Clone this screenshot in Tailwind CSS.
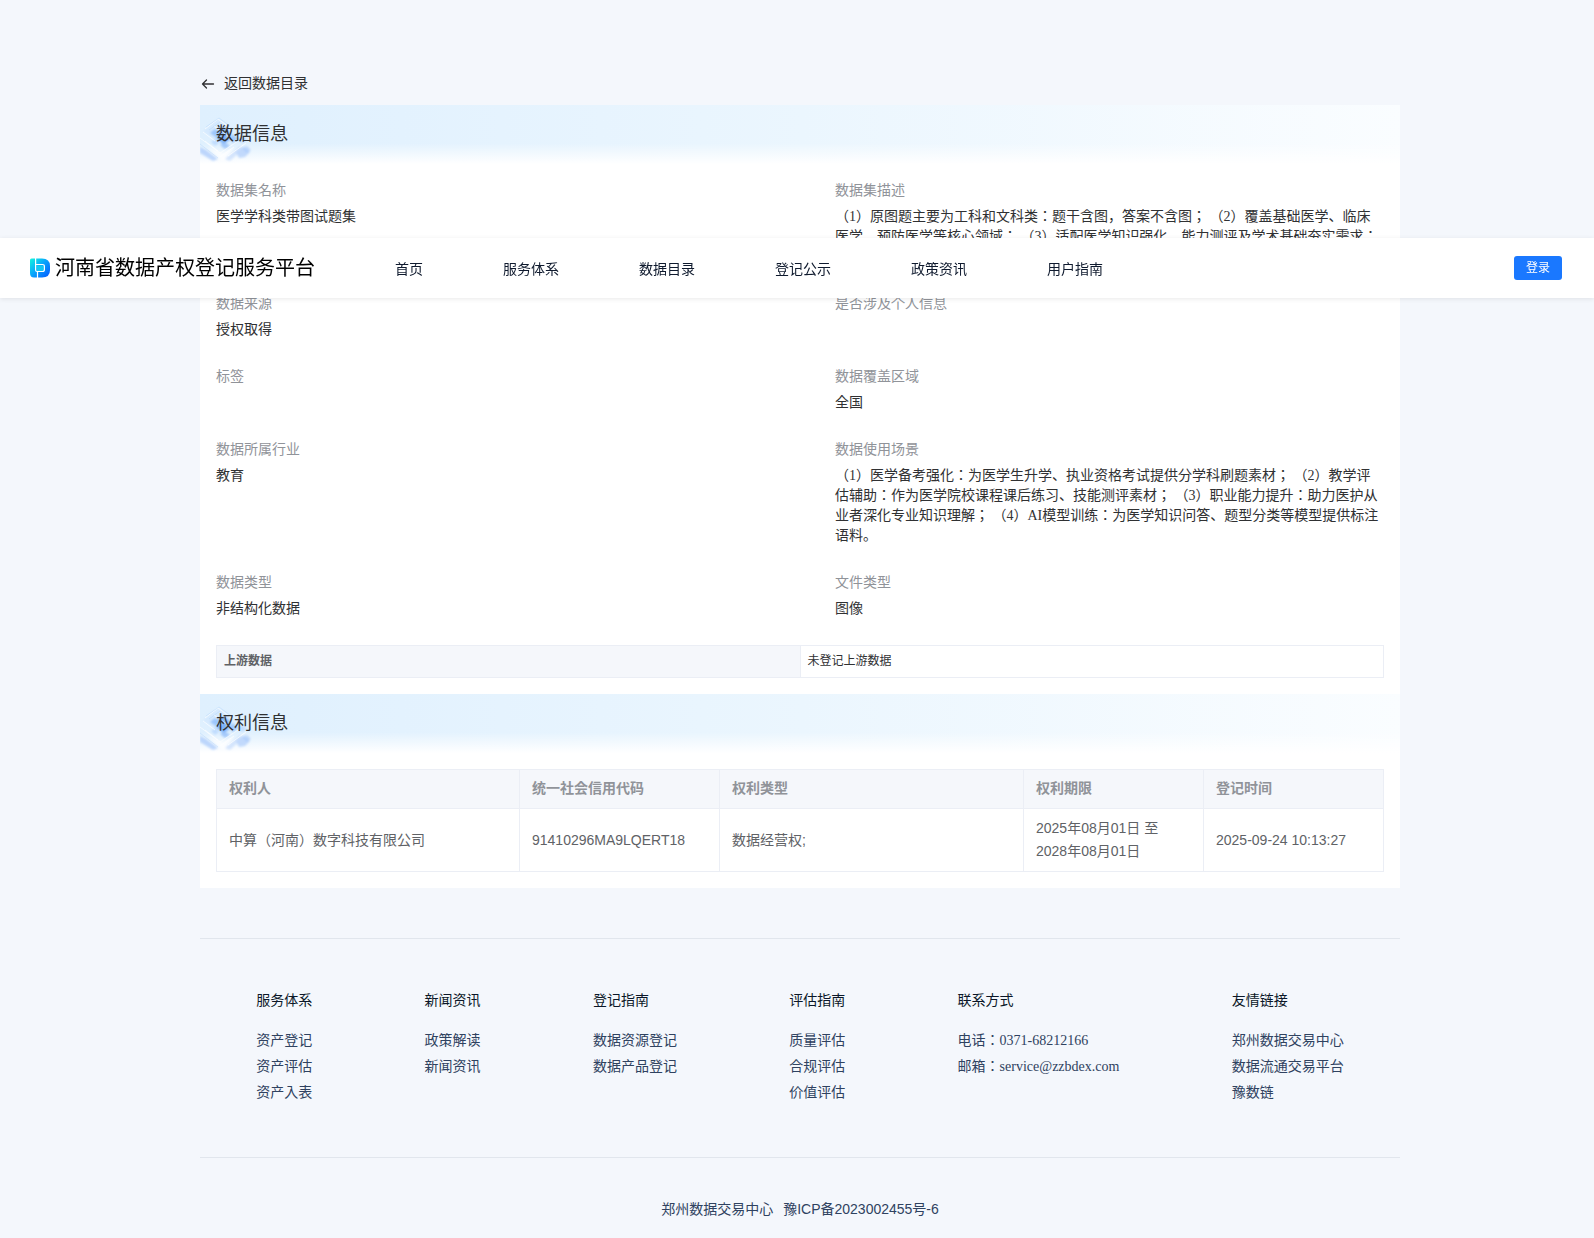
<!DOCTYPE html>
<html lang="ja">
<head>
    <meta charset="UTF-8">
    <meta name="viewport" content="width=device-width, initial-scale=1.0">
    <title>河南省数据产权登记服务平台</title>
    <script src="https://cdn.jsdelivr.net/npm/@tailwindcss/browser@4"></script>
</head>

<body class="bg-[#f4f7fc] min-h-screen text-sm leading-5 text-[#303133] font-['Liberation_Serif','Noto_Sans_CJK_JP',sans-serif]">

    <!-- shared drawings -->
    <svg class="absolute w-0 h-0" aria-hidden="true">
        <defs>
            <filter id="soft" x="-20%" y="-20%" width="140%" height="140%">
                <feGaussianBlur stdDeviation="1"/>
            </filter>
            <symbol id="cubes" viewBox="0 0 60 59">
                <g filter="url(#soft)">
                    <path d="M18 14 34 25 18 37 3 26Z" fill="#d3e8fe" opacity=".8"/>
                    <path d="M10 28 15 24 22 28 17 33Z" fill="#8dbefb" opacity=".8"/>
                    <path d="M18 25 24 22 31 28 25 33Z" fill="#6ba8f8" opacity=".75"/>
                    <path d="M16 33 23 30 30 35 23 39Z" fill="#5e9ff7" opacity=".75"/>
                    <path d="M28 32 33 29 38 34 33 38Z" fill="#8fbffb" opacity=".75"/>
                    <path d="M20 40 25 37 30 41 25 44Z" fill="#8ab9fa" opacity=".7"/>
                    <path d="M37 34 42 31 47 35 42 38Z" fill="#b9d8fd" opacity=".8"/>
                    <path d="M11 37 15 34 19 38 15 41Z" fill="#b3d4fd" opacity=".7"/>
                    <path d="M36 47 43 42 50 47 45 52 39 53Z" fill="#b2cffb" opacity=".75"/>
                    <path d="M42 43 47 41 51 45 47 48Z" fill="#a3c6fb" opacity=".6"/>
                    <path d="M25 54 40 41 43 44 30 56Z" fill="#bfd7fc" opacity=".6"/>
                    <path d="M0 42 6 45 18 54 13 56 0 48Z" fill="#a6c8fb" opacity=".7"/>
                    <path d="M8 42 22 48 34 43 23 56Z" fill="#ffffff" opacity=".7"/>
                </g>
                <path d="M5 24 18 14 33 25M0 33 20 48 38 36M3 27 15 36M14 21 28 31M28 51 46 38M5 36 18 46M20 52 34 42" fill="none" stroke="#ffffff" stroke-width="1" opacity=".65"/>
                <path d="M6 22 19 13 30 21M0 39 18 53M9 25 20 17" fill="none" stroke="#a9cdf8" stroke-width=".7" opacity=".5"/>
            </symbol>
            <linearGradient id="logoFill" gradientUnits="userSpaceOnUse" x1="0" y1="2" x2="18" y2="19">
                <stop offset="0" stop-color="#12f0e0"/>
                <stop offset=".45" stop-color="#08a8fb"/>
                <stop offset="1" stop-color="#0560ff"/>
            </linearGradient>
        </defs>
    </svg>

    <!-- HEADER -->
    <header class="fixed inset-x-0 top-[238px] z-10 h-15 px-[30px] flex items-center bg-white shadow-[0_1px_5px_rgba(0,0,0,0.09)]">
        <a href="#" class="flex items-center gap-[5px] text-xl leading-[30px] text-black whitespace-nowrap">
            <svg class="w-5 h-5" viewBox="0 0 20 20">
                <path d="M0 2Q0 .5 1.5 .5H12Q20 .5 20 8V12Q20 19.500 12 19.500H4Q0 19.500 0 15Z" fill="url(#logoFill)"/>
                <path d="M6.500 7.500H12.500Q13.800 7.500 13.800 8.500V11.500Q13.800 13 12.500 13H7.500Q6.500 13 6.500 12Z" fill="#14c8f2"/>
                <path d="M5.600 0V12Q5.600 13.500 7 13.500H12.500Q14.400 13.500 14.400 11.500V8.500Q14.400 6.500 12.500 6.500H5.600M7.500 14V20" fill="none" stroke="#fff" stroke-width="1.200"/>
            </svg>
            河南省数据产权登记服务平台
        </a>
        <nav class="ml-20 pt-1 flex gap-20 text-[#0f1a2e] whitespace-nowrap">
            <a href="#">首页</a>
            <a href="#">服务体系</a>
            <a href="#">数据目录</a>
            <a href="#">登记公示</a>
            <a href="#">政策资讯</a>
            <a href="#">用户指南</a>
        </nav>
        <button type="button" class="ml-auto mr-0.5 h-6 px-3 rounded-[3px] bg-[#1a78ff] text-xs text-white">登录</button>
    </header>

    <div class="pl-1.5">
        <main class="max-w-[1200px] mx-auto pt-[74px]">
            <a href="#" class="flex w-fit items-center gap-2 h-5">
                <svg class="w-4 h-4" viewBox="0 0 16 16" fill="none" stroke="#303133" stroke-width="1.300" stroke-linecap="round" stroke-linejoin="round">
                    <path d="M13.500 8H2.500M6.500 4 2.500 8 6.500 12"/>
                </svg>
                返回数据目录
            </a>

            <div class="mt-[11px] bg-white">
                <!-- DATA INFO -->
                <section>
                    <div class="relative h-[59px] bg-linear-to-r from-[#dff0fe] via-[#ebf6fe] to-[#fafdff]">
                        <div class="absolute inset-0 bg-linear-to-b from-white/0 from-65% to-white"></div>
                        <svg class="absolute left-0 top-0 w-15 h-[59px]"><use href="#cubes"/></svg>
                        <h2 class="relative px-4 pt-px text-lg leading-14">数据信息</h2>
                    </div>
                    <div class="p-4">
                        <dl class="pt-px -mb-px grid grid-cols-2 gap-x-[70px]">
                            <div class="pb-[27px]">
                                <dt class="mb-1.5 text-[#909399]">数据集名称</dt>
                                <dd>医学学科类带图试题集</dd>
                            </div>
                            <div class="pb-[27px]">
                                <dt class="mb-1.5 text-[#909399]">数据集描述</dt>
                                <dd>（1）原图题主要为工科和文科类：题干含图，答案不含图； （2）覆盖基础医学、临床医学、预防医学等核心领域； （3）适配医学知识强化、能力测评及学术基础夯实需求； 格式规范。</dd>
                            </div>
                            <div class="pb-[27px]">
                                <dt class="mb-1.5 text-[#909399]">数据来源</dt>
                                <dd>授权取得</dd>
                            </div>
                            <div class="pb-[27px]">
                                <dt class="mb-1.5 text-[#909399]">是否涉及个人信息</dt>
                                <dd></dd>
                            </div>
                            <div class="pb-[27px]">
                                <dt class="mb-1.5 text-[#909399]">标签</dt>
                                <dd></dd>
                            </div>
                            <div class="pb-[27px]">
                                <dt class="mb-1.5 text-[#909399]">数据覆盖区域</dt>
                                <dd>全国</dd>
                            </div>
                            <div class="pb-[27px]">
                                <dt class="mb-1.5 text-[#909399]">数据所属行业</dt>
                                <dd>教育</dd>
                            </div>
                            <div class="pb-[27px]">
                                <dt class="mb-1.5 text-[#909399]">数据使用场景</dt>
                                <dd>（1）医学备考强化：为医学生升学、执业资格考试提供分学科刷题素材； （2）教学评估辅助：作为医学院校课程课后练习、技能测评素材； （3）职业能力提升：助力医护从业者深化专业知识理解； （4）AI模型训练：为医学知识问答、题型分类等模型提供标注语料。</dd>
                            </div>
                            <div class="pb-[27px]">
                                <dt class="mb-1.5 text-[#909399]">数据类型</dt>
                                <dd>非结构化数据</dd>
                            </div>
                            <div class="pb-[27px]">
                                <dt class="mb-1.5 text-[#909399]">文件类型</dt>
                                <dd>图像</dd>
                            </div>
                        </dl>
                        <table class="w-full table-fixed border-collapse text-xs leading-5">
                            <tbody>
                                <tr class="h-8">
                                    <th scope="row" class="px-[7px] pb-0.5 border border-[#ebeef5] bg-[#f5f7fb] text-left font-bold text-[#606266]">上游数据</th>
                                    <td class="px-[7px] pb-0.5 border border-[#ebeef5]">未登记上游数据</td>
                                </tr>
                            </tbody>
                        </table>
                    </div>
                </section>

                <!-- RIGHTS INFO -->
                <section>
                    <div class="relative h-[59px] bg-linear-to-r from-[#dff0fe] via-[#ebf6fe] to-[#fafdff]">
                        <div class="absolute inset-0 bg-linear-to-b from-white/0 from-65% to-white"></div>
                        <svg class="absolute left-0 top-0 w-15 h-[59px]"><use href="#cubes"/></svg>
                        <h2 class="relative px-4 pt-px text-lg leading-14">权利信息</h2>
                    </div>
                    <div class="p-4">
                        <table class="w-full table-fixed border-collapse text-left leading-[23px] text-[#606266] font-['Liberation_Sans','Noto_Sans_CJK_JP',sans-serif]">
                            <colgroup>
                                <col class="w-[303px]">
                                <col class="w-[200px]">
                                <col>
                                <col class="w-[180px]">
                                <col class="w-[180px]">
                            </colgroup>
                            <thead class="bg-[#f5f7fb] text-[#909399]">
                                <tr>
                                    <th class="px-3 pt-[7px] pb-2 border border-[#ebeef5]">权利人</th>
                                    <th class="px-3 pt-[7px] pb-2 border border-[#ebeef5]">统一社会信用代码</th>
                                    <th class="px-3 pt-[7px] pb-2 border border-[#ebeef5]">权利类型</th>
                                    <th class="px-3 pt-[7px] pb-2 border border-[#ebeef5]">权利期限</th>
                                    <th class="px-3 pt-[7px] pb-2 border border-[#ebeef5]">登记时间</th>
                                </tr>
                            </thead>
                            <tbody>
                                <tr>
                                    <td class="px-3 py-2 border border-[#ebeef5]">中算（河南）数字科技有限公司</td>
                                    <td class="px-3 py-2 border border-[#ebeef5]">91410296MA9LQERT18</td>
                                    <td class="px-3 py-2 border border-[#ebeef5]">数据经营权;</td>
                                    <td class="px-3 py-2 border border-[#ebeef5]">2025年08月01日 至<br>2028年08月01日</td>
                                    <td class="px-3 py-2 border border-[#ebeef5]">2025-09-24 10:13:27</td>
                                </tr>
                            </tbody>
                        </table>
                    </div>
                </section>
            </div>
        </main>

        <!-- FOOTER -->
        <footer class="max-w-[1200px] mx-auto mt-[50px] text-[#2f4260]">
            <div class="h-55 pt-[52px] flex justify-around border-y border-[#e1e6ed]">
                <div class="flex flex-col gap-1.5">
                    <h3 class="mb-3.5 text-[#0b1728]">服务体系</h3>
                    <a href="#">资产登记</a>
                    <a href="#">资产评估</a>
                    <a href="#">资产入表</a>
                </div>
                <div class="flex flex-col gap-1.5">
                    <h3 class="mb-3.5 text-[#0b1728]">新闻资讯</h3>
                    <a href="#">政策解读</a>
                    <a href="#">新闻资讯</a>
                </div>
                <div class="flex flex-col gap-1.5">
                    <h3 class="mb-3.5 text-[#0b1728]">登记指南</h3>
                    <a href="#">数据资源登记</a>
                    <a href="#">数据产品登记</a>
                </div>
                <div class="flex flex-col gap-1.5">
                    <h3 class="mb-3.5 text-[#0b1728]">评估指南</h3>
                    <a href="#">质量评估</a>
                    <a href="#">合规评估</a>
                    <a href="#">价值评估</a>
                </div>
                <div class="flex flex-col gap-1.5">
                    <h3 class="mb-3.5 text-[#0b1728]">联系方式</h3>
                    <p>电话：0371-68212166</p>
                    <p>邮箱：service@zzbdex.com</p>
                </div>
                <div class="flex flex-col gap-1.5">
                    <h3 class="mb-3.5 text-[#0b1728]">友情链接</h3>
                    <a href="#">郑州数据交易中心</a>
                    <a href="#">数据流通交易平台</a>
                    <a href="#">豫数链</a>
                </div>
            </div>
            <div class="pt-[41px] pb-[19px] flex justify-center gap-2.5 font-['Liberation_Sans','Noto_Sans_CJK_JP',sans-serif]">
                <span>郑州数据交易中心</span>
                <a href="#">豫ICP备2023002455号-6</a>
            </div>
        </footer>
    </div>
</body>
</html>
